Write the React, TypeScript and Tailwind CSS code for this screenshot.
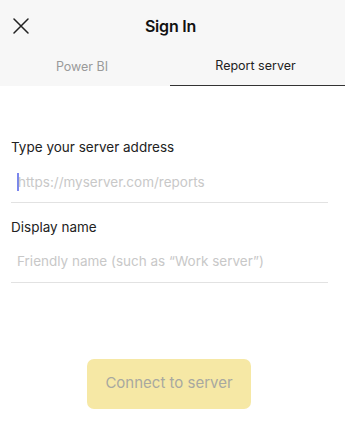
import React from 'react';

const App: React.FC = () => {
  return (
    <div className="w-[345px] h-[428px] bg-white flex flex-col" style={{ fontFamily: 'Inter, "Noto Sans", sans-serif' }}>
      <div className="bg-[#f7f7f7] flex flex-col">
        <div className="relative h-[52px] flex items-center justify-center">
          <button className="absolute left-[13px] top-[18px] w-[16px] h-[16px] text-[#222]" aria-label="Close">
            <svg viewBox="0 0 16 16" width="16" height="16" fill="none" stroke="currentColor" strokeWidth="1.5" strokeLinecap="round">
              <path d="M1 1 L15 15 M15 1 L1 15" />
            </svg>
          </button>
          <h1 className="text-[16px] font-semibold text-[#111] tracking-[-0.2px] ml-[-4px]">Sign In</h1>
        </div>
        <div className="flex h-[34px]">
          <div className="w-[170px] flex items-center justify-center text-[12.5px] text-[#9a9a9a] pb-[4px] pr-[6px]">Power BI</div>
          <div className="flex-1 flex items-center justify-center text-[12.5px] text-[#222] pb-[4px] border-b-[1.5px] border-[#333] pr-[4px]">Report server</div>
        </div>
      </div>
      <div className="flex flex-col px-[11px] pt-[51px]">
        <label className="text-[13.5px] text-[#222]">Type your server address</label>
        <div className="h-[46px] flex items-center border-b border-[#e2e2e2] mr-[6px] pl-[6px] pt-[4px]">
          <span className="w-[2px] h-[18px] bg-[#7b86ee] mr-[-1px]" />
          <span className="text-[13.5px] text-[#c8c8c8]">https://myserver.com/reports</span>
        </div>
        <label className="text-[13.5px] text-[#222] mt-[14px]">Display name</label>
        <div className="h-[45px] flex items-center border-b border-[#e2e2e2] mr-[6px] pl-[6px] pt-[4px]">
          <span className="text-[13.5px] text-[#c8c8c8]">Friendly name (such as “Work server”)</span>
        </div>
      </div>
      <div className="flex mt-[76px] pl-[87px]">
        <button className="w-[164px] h-[50px] rounded-[7px] bg-[#f6e8a5] text-[15px] text-[#a8a8a0]">Connect to server</button>
      </div>
    </div>
  );
};

export default App;
